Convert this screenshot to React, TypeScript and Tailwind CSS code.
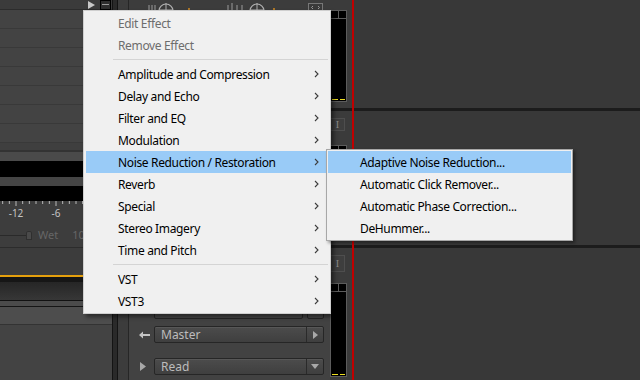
import type { ReactNode } from "react";

const FONT = { fontFamily: '"Noto Sans", "Open Sans", sans-serif' };

type Item = { label: string; disabled?: boolean; sub?: boolean; active?: boolean } | "sep";

const MENU: Item[] = [
  { label: "Edit Effect", disabled: true },
  { label: "Remove Effect", disabled: true },
  "sep",
  { label: "Amplitude and Compression", sub: true },
  { label: "Delay and Echo", sub: true },
  { label: "Filter and EQ", sub: true },
  { label: "Modulation", sub: true },
  { label: "Noise Reduction / Restoration", sub: true, active: true },
  { label: "Reverb", sub: true },
  { label: "Special", sub: true },
  { label: "Stereo Imagery", sub: true },
  { label: "Time and Pitch", sub: true },
  "sep",
  { label: "VST", sub: true },
  { label: "VST3", sub: true },
];

const SUBMENU = [
  "Adaptive Noise Reduction...",
  "Automatic Click Remover...",
  "Automatic Phase Correction...",
  "DeHummer...",
];

function Chevron() {
  return (
    <svg width="5" height="8" viewBox="0 0 5 8" className="shrink-0">
      <path d="M1 1 L4 4 L1 7" fill="none" stroke="#3c3c3c" strokeWidth="1.1" />
    </svg>
  );
}

function Ruler() {
  const ticks: number[] = [];
  for (let k = -2; k <= 14; k++) ticks.push(16 + k * 6.667);
  return (
    <svg width="112" height="24" className="block">
      {ticks.map((x, i) => (
        <line
          key={i}
          x1={x}
          x2={x}
          y1="0"
          y2={(i - 2) % 6 === 0 ? 5 : 3}
          stroke="#b8b8b8"
          strokeWidth="1"
        />
      ))}
      <text x="16" y="16" fill="#c4c4c4" fontSize="10" textAnchor="middle" style={FONT}>
        -12
      </text>
      <text x="56" y="16" fill="#c4c4c4" fontSize="10" textAnchor="middle" style={FONT}>
        -6
      </text>
    </svg>
  );
}

function Meter({ h }: { h: string }) {
  return (
    <div className={`flex w-[17px] flex-col border border-[#5c5c5c] bg-black ${h}`}>
      <div className="flex h-[8px] border-b border-[#5c5c5c]">
        <div className="flex-1 border-r border-[#5c5c5c]" />
        <div className="flex-1" />
      </div>
      <div className="flex-1" />
      <div className="mb-[1px] flex gap-[2px] px-[1px]">
        <div className="h-[1px] flex-1 bg-[#f0e020]" />
        <div className="h-[1px] flex-1 bg-[#f0e020]" />
      </div>
    </div>
  );
}

function IButton({ h }: { h: string }) {
  return (
    <div
      className={`flex w-[15px] items-center justify-center border border-[#4e4e4e] bg-[#3e3e3e] text-[10px] leading-none text-[#8a8a8a] ${h}`}
      style={{ fontFamily: '"Liberation Serif", serif' }}
    >
      I
    </div>
  );
}

function Dropdown({ label, icon }: { label: string; icon: ReactNode }) {
  return (
    <div className="flex h-[17px] w-[170px] items-stretch rounded-[2px] border border-[#262626] bg-gradient-to-b from-[#4c4c4c] to-[#3f3f3f] shadow-[inset_0_1px_0_#575757]">
      <div className="flex flex-1 items-center pl-[6px] text-[12px] text-[#bcbcbc]" style={FONT}>
        {label}
      </div>
      <div className="w-[1px] bg-[#2a2a2a]" />
      <div className="flex w-[16px] items-center justify-center">{icon}</div>
    </div>
  );
}

function StripTop() {
  return (
    <svg width="201" height="10" className="block">
      {[20, 23, 26].map((x) => (
        <line key={x} x1={x} x2={x} y1="5" y2="10" stroke="#9a9a9a" />
      ))}
      <circle cx="37" cy="11" r="7" fill="#3a3a3a" stroke="#b0b0b0" strokeWidth="1.2" />
      <line x1="37" x2="37" y1="3" y2="10" stroke="#b0b0b0" />
      <line x1="30" x2="44" y1="10" y2="10" stroke="#b0b0b0" />
      <circle cx="60" cy="9" r="1" fill="#d08a20" />
      {[99, 103, 108, 113].map((x) => (
        <line key={x} x1={x} x2={x} y1={x === 103 ? 3 : 5} y2="10" stroke="#9a9a9a" />
      ))}
      <circle cx="128" cy="11" r="7" fill="#3a3a3a" stroke="#b0b0b0" strokeWidth="1.2" />
      <line x1="128" x2="128" y1="3" y2="10" stroke="#b0b0b0" />
      <line x1="121" x2="135" y1="10" y2="10" stroke="#b0b0b0" />
      <circle cx="145" cy="9" r="1" fill="#d08a20" />
      <rect x="179.5" y="3.5" width="14" height="8" fill="#3a3a3a" stroke="#777" />
      <path d="M184 6 L182.5 7.5 L184 9 M189 6 L190.5 7.5 L189 9" stroke="#999" fill="none" />
    </svg>
  );
}

function LeftPanel() {
  return (
    <div className="flex w-[112px] shrink-0 flex-col bg-[#3f3f3f]">
      <div className="flex h-[10px] items-center justify-end gap-[5px] border-b border-[#2c2c2c] bg-[#3b3b3b] pr-[1px]">
        <svg width="7" height="8">
          <path d="M0 0 L7 4 L0 8 Z" fill="#c8c8c8" />
        </svg>
        <div className="flex h-[10px] w-[11px] flex-col justify-center gap-[2px] border border-black bg-[#2e2e2e] px-[1px]">
          <div className="h-[1px] bg-[#9a9a9a]" />
        </div>
      </div>
      {Array.from({ length: 7 }).map((_, i) => (
        <div key={i} className="h-[19px] border-b border-[#393939] bg-[#434343]" />
      ))}
      <div className="h-[9px] border-b-2 border-[#333] bg-[#3f3f3f]" />
      <div className="h-[9px] bg-[#4a4a4a]" />
      <div className="h-[16px] bg-black" />
      <div className="h-[9px] bg-[#454545]" />
      <div className="h-[15px] bg-black" />
      <div className="h-[24px] bg-[#3d3d3d]">
        <Ruler />
      </div>
      <div className="flex h-[22px] items-center bg-[#3d3d3d] pb-[2px]">
        <div className="h-[1px] w-[26px] bg-[#2a2a2a]" />
        <div className="h-[9px] w-[6px] rounded-t-[2px] bg-[#4a4a4a] shadow-[inset_0_0_0_1px_#2f2f2f]" />
        <span className="ml-[6px] text-[11px] text-[#666]" style={FONT}>
          Wet
        </span>
        <span className="ml-[14px] text-[11px] text-[#666]" style={FONT}>
          100
        </span>
      </div>
      <div className="h-[28px] border-t border-[#2c2c2c] bg-[#3c3c3c]" />
      <div className="h-[2px] bg-[#e5a00d]" />
      <div className="h-[5px] bg-[#161616]" />
      <div className="h-[18px] bg-gradient-to-b from-[#262626] to-[#373737]" />
      <div className="h-[1px] bg-[#111]" />
      <div className="h-[5px] bg-[#4b4b4b]" />
      <div className="h-[1px] bg-[#151515]" />
      <div className="h-[18px] border-b border-[#333] bg-[#4d4d4d]" />
      <div className="flex-1 bg-[#434343]" />
    </div>
  );
}

function Strip() {
  return (
    <div className="flex w-[201px] shrink-0 flex-col bg-[#424242]">
      <div className="h-[10px] bg-[#3c3c3c]">
        <StripTop />
      </div>
      <div className="h-[98px]" />
      <div className="h-[3px] bg-[#1c1c1c]" />
      <div className="h-[134px]" />
      <div className="h-[3px] bg-[#1c1c1c]" />
      <div className="h-[56px]" />
      <div className="flex items-center gap-[4px] pl-[25px]">
        <div className="h-[15px] w-[149px] rounded-[2px] border border-[#262626] bg-[#454545]" />
        <div className="h-[15px] w-[17px] rounded-[2px] border border-[#262626] bg-[#454545]" />
      </div>
      <div className="h-[7px]" />
      <div className="flex items-center gap-[4px] pl-[10px]">
        <svg width="11" height="8">
          <path d="M0 4 L4 0.5 L4 3 L11 3 L11 5 L4 5 L4 7.5 Z" fill="#c4c4c4" />
        </svg>
        <Dropdown
          label="Master"
          icon={
            <svg width="5" height="8">
              <path d="M0 0 L5 4 L0 8 Z" fill="#a8a8a8" />
            </svg>
          }
        />
      </div>
      <div className="h-[15px]" />
      <div className="flex items-center gap-[8px] pl-[11px]">
        <svg width="6" height="9">
          <path d="M0 0 L6 4.5 L0 9 Z" fill="#a8a8a8" />
        </svg>
        <Dropdown
          label="Read"
          icon={
            <svg width="8" height="5">
              <path d="M0 0 L8 0 L4 5 Z" fill="#a8a8a8" />
            </svg>
          }
        />
      </div>
    </div>
  );
}

function MeterColumn() {
  return (
    <div className="flex w-[22px] shrink-0 flex-col bg-[#3b3b3b]">
      <div className="h-[10px]" />
      <Meter h="h-[92px]" />
      <div className="h-[6px]" />
      <div className="h-[3px] w-[22px] bg-[#1c1c1c]" />
      <div className="h-[7px]" />
      <IButton h="h-[13px]" />
      <div className="h-[14px]" />
      <Meter h="h-[96px]" />
      <div className="h-[4px]" />
      <div className="h-[3px] w-[22px] bg-[#1c1c1c]" />
      <div className="h-[7px]" />
      <IButton h="h-[17px]" />
      <div className="h-[11px]" />
      <Meter h="h-[94px]" />
    </div>
  );
}

function ContextMenu() {
  return (
    <div
      className="absolute left-[83px] top-[10px] flex w-[248px] flex-col border border-[#cfcfcf] bg-[#f0f0f0] px-[2px] py-[1px] shadow-[3px_3px_4px_rgba(0,0,0,0.45)]"
      style={FONT}
    >
      {MENU.map((it, i) =>
        it === "sep" ? (
          <div key={i} className="flex h-[7px] items-center pl-[27px]">
            <div className="h-[1px] flex-1 bg-[#d4d4d4]" />
          </div>
        ) : (
          <div
            key={i}
            className={`flex h-[22px] items-center justify-between pl-[32px] pr-[9px] text-[12px] tracking-[-0.35px] ${
              it.active ? "bg-[#99cbf7]" : ""
            } ${it.disabled ? "text-[#6d6d6d]" : "text-[#000]"}`}
          >
            <span className="pt-[2px]">{it.label}</span>
            {it.sub && <Chevron />}
          </div>
        )
      )}
    </div>
  );
}

function SubMenu() {
  return (
    <div
      className="absolute left-[326px] top-[149px] flex w-[247px] flex-col border border-[#a7a7a7] bg-[#f0f0f0] p-[1px] shadow-[2px_2px_3px_rgba(0,0,0,0.4)]"
      style={FONT}
    >
      {SUBMENU.map((label, i) => (
        <div
          key={label}
          className={`flex h-[22px] items-center pl-[32px] pt-[2px] text-[12px] tracking-[-0.35px] text-black ${
            i === 0 ? "bg-[#99cbf7]" : ""
          }`}
        >
          {label}
        </div>
      ))}
    </div>
  );
}

export default function App() {
  return (
    <div className="relative flex h-[380px] w-[640px] overflow-hidden bg-[#383838]">
      <LeftPanel />
      <div className="flex w-[17px] shrink-0">
        <div className="w-[1px] bg-[#141414]" />
        <div className="w-[4px] bg-[#2a2a2a]" />
        <div className="w-[1px] bg-[#141414]" />
        <div className="flex-1 border-r border-[#262626] bg-[#3c3c3c]" />
      </div>
      <Strip />
      <MeterColumn />
      <div className="w-[2px] shrink-0 bg-[#c00000]" />
      <div className="flex flex-1 flex-col">
        <div className="h-[108px]" />
        <div className="h-[3px] bg-[#1c1c1c]" />
        <div className="h-[134px]" />
        <div className="h-[3px] bg-[#1c1c1c]" />
      </div>
      <ContextMenu />
      <SubMenu />
    </div>
  );
}
